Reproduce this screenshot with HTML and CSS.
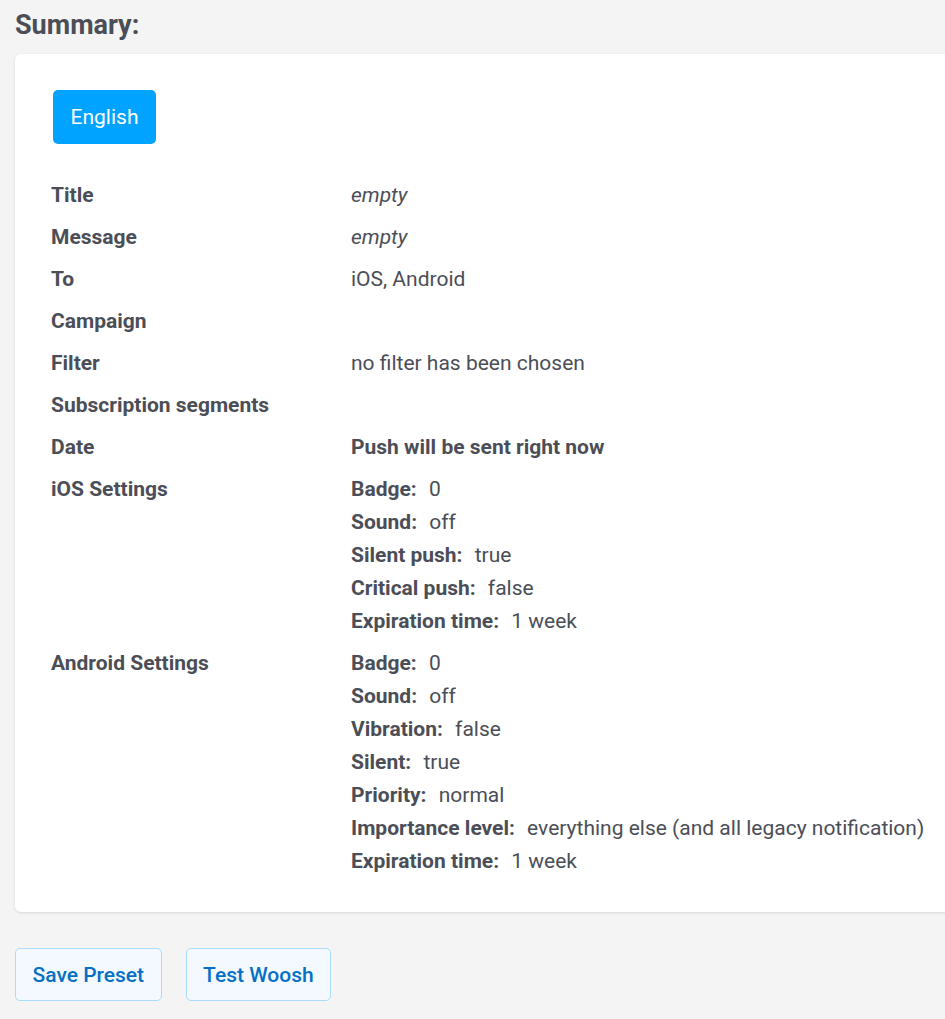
FILE: index.html
```html
<!DOCTYPE html>
<html lang="en">
<head>
  <meta charset="UTF-8" />
  <meta name="viewport" content="width=device-width, initial-scale=1.0"/>
  <title>Summary</title>
  <link rel="stylesheet" href="styles.css">
</head>
<body>
  <h2 class="page-title">Summary:</h2>

  <div class="card">
    <div class="langs">
      <button class="lang-tab">English</button>
    </div>

    <div class="summary">
      <div class="row">
        <div class="label">Title</div>
        <div class="value empty">empty</div>
      </div>
      <div class="row">
        <div class="label">Message</div>
        <div class="value empty">empty</div>
      </div>
      <div class="row">
        <div class="label">To</div>
        <div class="value">iOS, Android</div>
      </div>
      <div class="row">
        <div class="label">Campaign</div>
        <div class="value"></div>
      </div>
      <div class="row">
        <div class="label">Filter</div>
        <div class="value">no filter has been chosen</div>
      </div>
      <div class="row">
        <div class="label">Subscription segments</div>
        <div class="value"></div>
      </div>
      <div class="row">
        <div class="label">Date</div>
        <div class="value strong">Push will be sent right now</div>
      </div>
      <div class="row">
        <div class="label">iOS Settings</div>
        <div class="value">
          <div><b>Badge:</b> 0</div>
          <div><b>Sound:</b> off</div>
          <div><b>Silent push:</b> true</div>
          <div><b>Critical push:</b> false</div>
          <div><b>Expiration time:</b> 1 week</div>
        </div>
      </div>
      <div class="row">
        <div class="label">Android Settings</div>
        <div class="value">
          <div><b>Badge:</b> 0</div>
          <div><b>Sound:</b> off</div>
          <div><b>Vibration:</b> false</div>
          <div><b>Silent:</b> true</div>
          <div><b>Priority:</b> normal</div>
          <div><b>Importance level:</b> everything else (and all legacy notification)</div>
          <div><b>Expiration time:</b> 1 week</div>
        </div>
      </div>
    </div>
  </div>

  <div class="actions">
    <button class="btn-light">Save Preset</button>
    <button class="btn-light">Test Woosh</button>
  </div>
</body>
</html>
```

FILE: styles.css
```css
:root {
  --bg-color: #f4f4f4;
  --text-color: #4b4e57;
  --card-bg: #ffffff;
  --accent: #00a3ff;
  --link-blue: #0670c6;
}

html, body {
  overflow: hidden;
}

body {
  margin: 0;
  padding: 0 0 0 15px;
  font-family: Roboto, "Liberation Sans", sans-serif;
  background-color: var(--bg-color);
  color: var(--text-color);
  font-size: 21px;
}

.page-title {
  margin: 0;
  padding-top: 9px;
  font-size: 27px;
  line-height: 33px;
  font-weight: 700;
  height: 45px;
}

.card {
  background: var(--card-bg);
  border-radius: 6px 0 0 6px;
  box-shadow: 0 1px 3px rgba(0, 0, 0, 0.12);
  padding: 36px 36px 34px 36px;
  margin-right: -20px;
}

.langs {
  display: flex;
  margin-left: 2px;
  margin-bottom: 35px;
}

.lang-tab {
  background-color: var(--accent);
  color: #fff;
  border: none;
  border-radius: 5px;
  font-family: inherit;
  font-size: 21px;
  height: 54px;
  padding: 0 17.5px;
  cursor: pointer;
}

.summary {
  display: flex;
  flex-direction: column;
  gap: 9px;
}

.row {
  display: flex;
  line-height: 33px;
}

.label {
  width: 300px;
  flex-shrink: 0;
  font-weight: 700;
}

.value b {
  margin-right: 7px;
}

.empty {
  font-style: italic;
}

.strong {
  font-weight: 700;
}

.actions {
  display: flex;
  gap: 24px;
  margin-top: 36px;
}

.btn-light {
  background: #f3f9fe;
  border: 1px solid #a9dcfa;
  border-radius: 5px;
  color: var(--link-blue);
  font-family: inherit;
  font-size: 21px;
  font-weight: 500;
  height: 53px;
  padding: 0 16.5px;
  cursor: pointer;
}
```
